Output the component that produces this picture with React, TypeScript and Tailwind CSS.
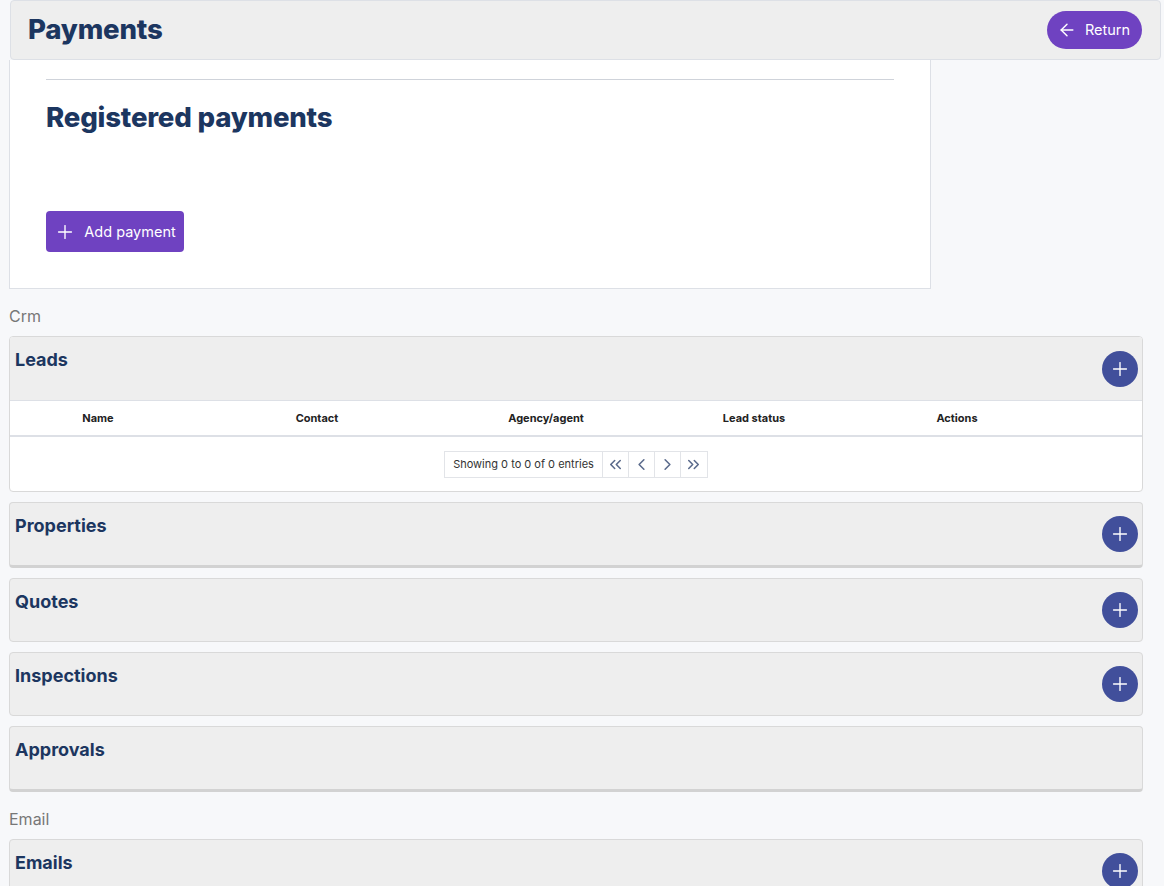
import { ArrowLeft, Plus, ChevronsLeft, ChevronLeft, ChevronRight, ChevronsRight } from 'lucide-react'

const font = { fontFamily: 'Inter, "Noto Sans", sans-serif' }

const columns = ['Name', 'Contact', 'Agency/agent', 'Lead status', 'Actions']

function AddCircle() {
  return (
    <button className="w-9 h-9 rounded-full bg-[#414f9b] flex items-center justify-center text-white">
      <Plus className="w-[22px] h-[22px]" strokeWidth={1.5} />
    </button>
  )
}

function SectionCard({ title, add = true, thick = false }: { title: string; add?: boolean; thick?: boolean }) {
  return (
    <div
      className={
        'w-[1134px] ml-[9px] rounded-[4px] border border-[#d9d9d9] bg-[#eeeeee] ' +
        (thick ? 'border-b-[3px] border-b-[#d2d2d2]' : '')
      }
    >
      <div className="h-[62px] flex justify-between items-center pl-[5px] pr-[4px]">
        <h3 className="self-start pt-[10px] text-[18px] leading-[26px] font-bold text-[#1c3660]">{title}</h3>
        {add && <AddCircle />}
      </div>
    </div>
  )
}

function Label({ children }: { children: string }) {
  return <div className="pl-[9px] mt-[15px] mb-[8px] h-[24px] leading-[24px] text-[16px] text-[#777777]">{children}</div>
}

export default function App() {
  return (
    <div className="min-h-screen bg-[#f7f8fa] pb-10" style={font}>
      {/* Top bar */}
      <header className="ml-[10px] w-[1151px] h-[60px] rounded-[4px] border border-[#dde0e6] bg-[#eeeeee] flex items-center justify-between pl-[17px] pr-[18px]">
        <h1 className="text-[27.6px] font-extrabold text-[#1c3660] tracking-[-0.2px]">Payments</h1>
        <button className="h-[38px] w-[95px] rounded-full bg-[#6f42c1] text-white flex items-center justify-center gap-[8px] text-[14.5px] pr-[2px]">
          <ArrowLeft className="w-[20px] h-[20px]" strokeWidth={1.75} />
          Return
        </button>
      </header>

      {/* Payments card */}
      <section className="ml-[9px] w-[922px] bg-white border border-t-0 border-[#dde0e6] px-[36px] pt-[19px] pb-[36px]">
        <hr className="border-t border-[#cfd3da]" />
        <h2 className="mt-[19px] text-[27.6px] leading-[36px] font-extrabold text-[#1c3660] tracking-[-0.2px]">
          Registered payments
        </h2>
        <button className="mt-[76px] h-[41px] w-[138px] rounded-[4px] bg-[#6f42c1] text-white flex items-center justify-center gap-[8px] text-[14.5px]">
          <Plus className="w-[22px] h-[22px]" strokeWidth={1.5} />
          Add payment
        </button>
      </section>

      <Label>Crm</Label>

      <div className="flex flex-col gap-[10px]">
        {/* Leads */}
        <div className="w-[1134px] ml-[9px] rounded-[4px] border border-[#d9d9d9] bg-white overflow-hidden">
          <div className="h-[64px] bg-[#eeeeee] flex justify-between items-center pl-[5px] pr-[4px] border-b border-[#dde0e6]">
            <h3 className="self-start pt-[10px] text-[18px] leading-[26px] font-bold text-[#1c3660]">Leads</h3>
            <AddCircle />
          </div>
          <div className="grid grid-cols-[176px_262px_196px_220px_186px_1fr] h-[36px] items-center border-b-2 border-[#dde0e6] text-[11px] font-bold text-[#222222]">
            {columns.map((c) => (
              <div key={c} className="text-center">{c}</div>
            ))}
            <div />
          </div>
          <div className="flex justify-center pt-[14px] pb-[13px]">
            <div className="flex h-[27px] border border-[#e2e4e8] text-[11px] text-[#333333]">
              <div className="px-[8px] flex items-center border-r border-[#e2e4e8]">Showing 0 to 0 of 0 entries</div>
              {[ChevronsLeft, ChevronLeft, ChevronRight, ChevronsRight].map((Icon, i) => (
                <div
                  key={i}
                  className={'w-[26px] flex items-center justify-center text-[#5b6b8c] ' + (i < 3 ? 'border-r border-[#e2e4e8]' : '')}
                >
                  <Icon className="w-[19px] h-[19px]" strokeWidth={2} />
                </div>
              ))}
            </div>
          </div>
        </div>

        <SectionCard title="Properties" thick />
        <SectionCard title="Quotes" />
        <SectionCard title="Inspections" />
        <SectionCard title="Approvals" add={false} thick />
      </div>

      <Label>Email</Label>

      <SectionCard title="Emails" />
    </div>
  )
}
